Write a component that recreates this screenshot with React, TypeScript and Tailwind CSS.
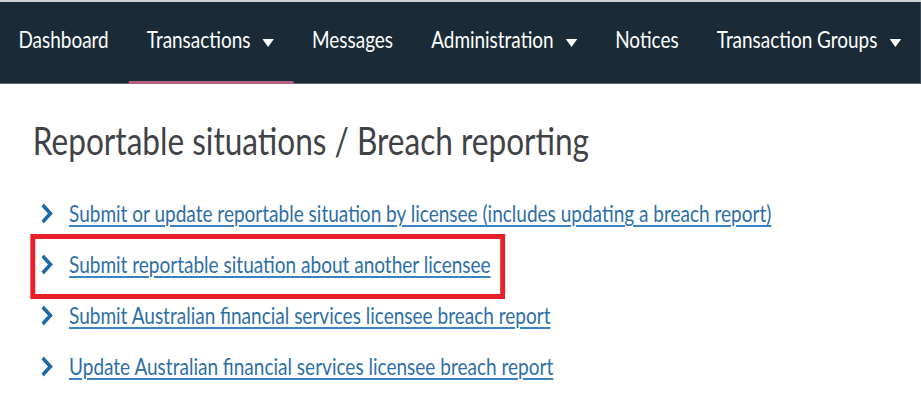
import React from "react";

function Caret() {
  return (
    <svg width="14" height="8" viewBox="0 0 14 8" className="ml-[14.6px] mt-[1px]">
      <polygon points="0,0 14,0 7,8" fill="#ffffff" />
    </svg>
  );
}

function Chevron() {
  return (
    <svg width="16" height="21" viewBox="0 0 16 21" className="shrink-0">
      <polyline points="3,2 12.5,10.5 3,19" fill="none" stroke="#1d6aa6" strokeWidth="4" strokeLinejoin="miter" />
    </svg>
  );
}

const navItems: { label: string; caret?: boolean; active?: boolean }[] = [
  { label: "Dashboard" },
  { label: "Transactions", caret: true, active: true },
  { label: "Messages" },
  { label: "Administration", caret: true },
  { label: "Notices" },
  { label: "Transaction Groups", caret: true },
];

const links = [
  "Submit or update reportable situation by licensee (includes updating a breach report)",
  "Submit reportable situation about another licensee",
  "Submit Australian financial services licensee breach report",
  "Update Australian financial services licensee breach report",
];

export default function App() {
  return (
    <div className="w-[921px] h-[414px] overflow-hidden bg-white">
      <div
        className="w-[1123px] origin-top-left scale-x-[0.82]"
        style={{ fontFamily: "Lato, 'Open Sans', sans-serif" }}
      >
        <div className="h-[2px] bg-[#cdd2d6]" />
        <nav className="h-[82px] bg-[#1a2b37] border-b border-[#5d6a73] flex items-stretch">
          {navItems.map((it) => (
            <div
              key={it.label}
              className="relative flex items-center pl-[22.5px] pr-[24px] text-white text-[23.1px]"
            >
              <span className="pb-[7px]">{it.label}</span>
              {it.caret && <Caret />}
              {it.active && (
                <span className="absolute left-0 right-0 bottom-[-1px] h-[3px] bg-[#b4607e]" />
              )}
            </div>
          ))}
        </nav>
        <h1 className="ml-[40px] mt-[33px] text-[38.5px] leading-[46px] text-[#3f4246]">
          Reportable situations / Breach reporting
        </h1>
        <ul className="ml-[36.6px] mt-[25px]">
          {links.map((l, i) => (
            <li key={l} className="relative h-[51px] flex items-center pl-[12.2px]">
              <Chevron />
              <a
                href="#"
                className="ml-[19.4px] text-[23.2px] text-[#2c6ea8] underline decoration-[#3b83c0] decoration-[1.5px] underline-offset-[3px]"
              >
                {l}
              </a>
              {i === 1 && (
                <span className="absolute left-0 w-[579px] top-[-5px] bottom-[-9px] border-x-[6.1px] border-y-[5px] border-[#e8202a] pointer-events-none" />
              )}
            </li>
          ))}
        </ul>
      </div>
    </div>
  );
}
